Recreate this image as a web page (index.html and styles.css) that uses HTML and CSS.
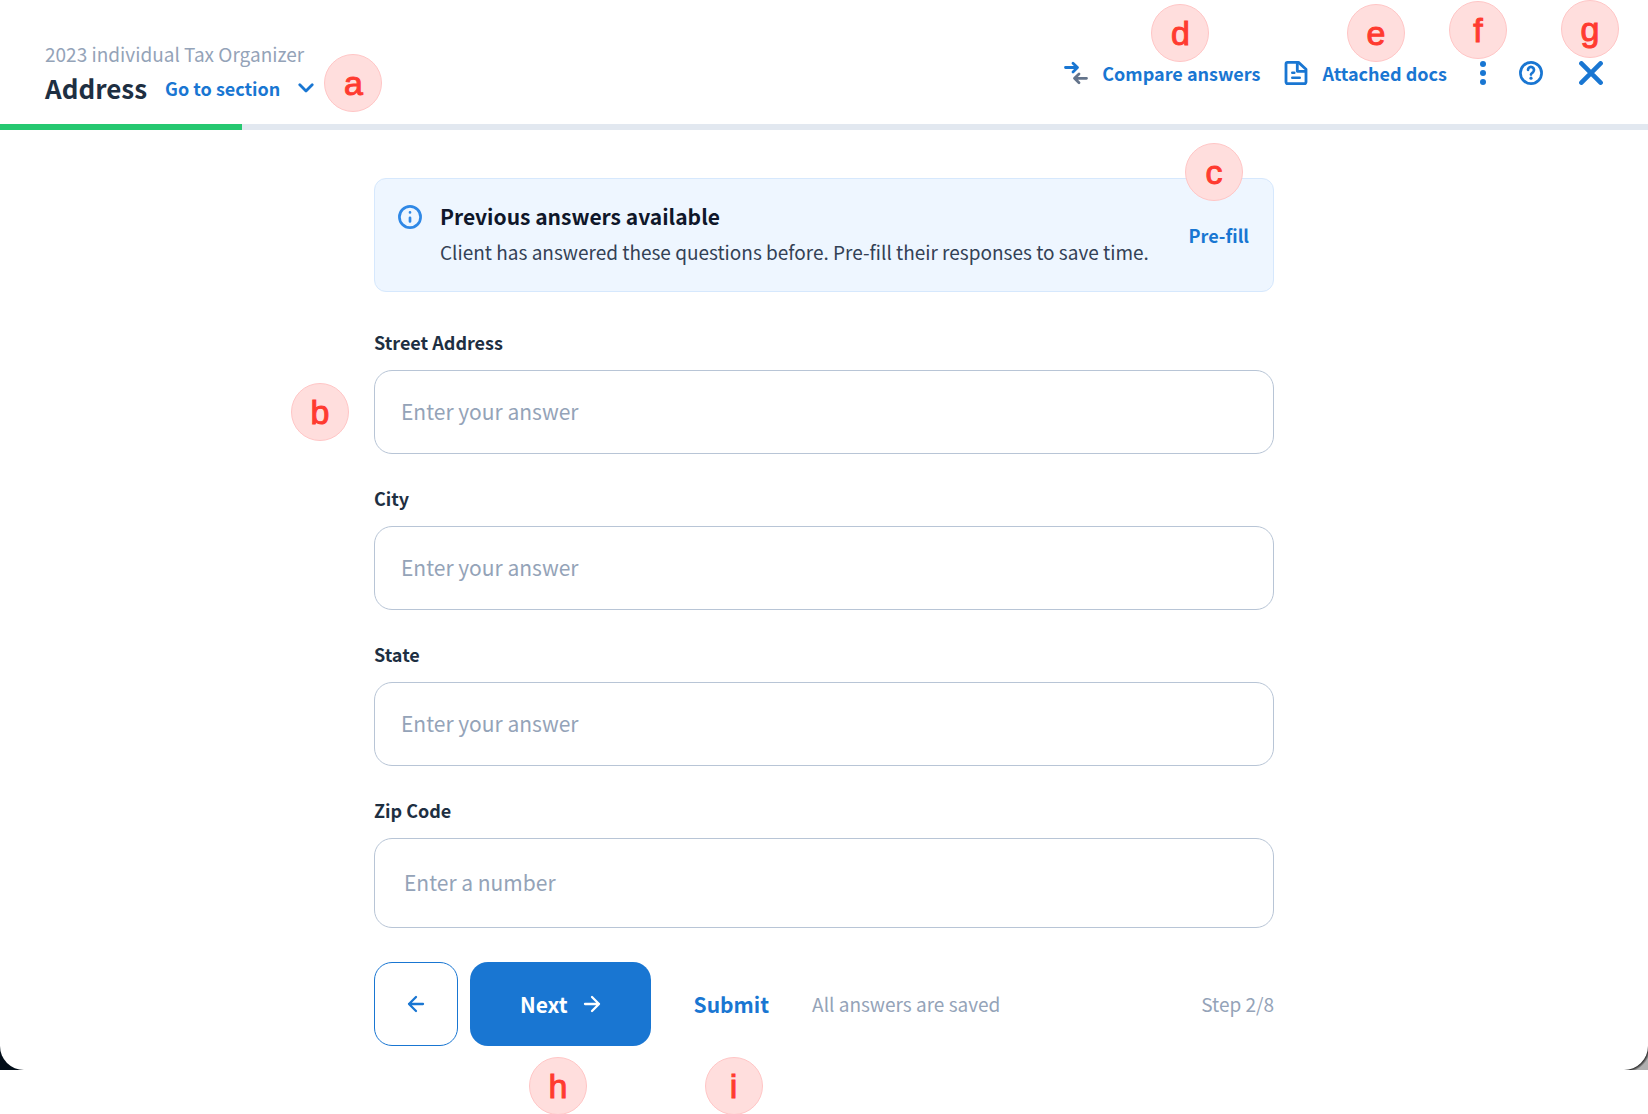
FILE: index.html
```
<!DOCTYPE html>
<html lang="en">
<head>
  <meta charset="UTF-8">
  <title>Address | 2023 individual Tax Organizer</title>
  <meta name="viewport" content="width=device-width, initial-scale=1.0">
  <link rel="stylesheet" href="styles.css">
</head>
<body>
<div class="backdrop">
  <div class="organizer">
    <header class="header">
      <div class="heading">
        <p class="organizer-name">2023 individual Tax Organizer</p>
        <div class="section-row">
          <h1>Address</h1>
          <div class="marked">
            <button type="button" class="link-btn section-btn">
              Go to section
              <svg width="16" height="10" viewBox="0 0 16 10" fill="none" stroke="currentColor" stroke-width="2.8" stroke-linecap="round" stroke-linejoin="round"><path d="M1.8 1.8 8 8l6.2-6.2"/></svg>
            </button>
            <span class="marker marker-a">a</span>
          </div>
        </div>
      </div>
      <div class="actions">
        <div class="marked">
          <button type="button" class="link-btn">
            <svg width="24" height="24" viewBox="0 0 24 24" fill="none" stroke-width="2.8" stroke-linecap="round" stroke-linejoin="round">
              <path stroke="currentColor" d="M1.500 6.500H13M9 2.200l4.500 4.300L9 11"/>
              <path stroke="#64748b" d="M22.500 17.300H11M15 13l-4.500 4.300 4.500 4.500"/>
            </svg>
            Compare answers
          </button>
          <span class="marker marker-d">d</span>
        </div>
        <div class="marked">
          <button type="button" class="link-btn">
            <svg width="24" height="24" viewBox="0 0 24 24" fill="none" stroke="currentColor" stroke-width="2.800" stroke-linejoin="round">
              <path d="M14.500 1.400H3.500A1.500 1.500 0 0 0 2 2.900v18.200a1.500 1.500 0 0 0 1.500 1.500h17a1.500 1.500 0 0 0 1.500-1.500V8.200z"/>
              <path d="M13.300 1.500v8.800h8.500"/>
              <path stroke-linecap="round" stroke-width="2.600" d="M8.300 11.800h2M8.300 16.800h7.400"/>
            </svg>
            Attached docs
          </button>
          <span class="marker marker-e">e</span>
        </div>
        <div class="icon-actions">
          <div class="marked">
            <button type="button" class="icon-btn" aria-label="More">
              <svg width="24" height="24" viewBox="0 0 24 24" fill="currentColor"><circle cx="12" cy="3" r="3"/><circle cx="12" cy="12" r="3"/><circle cx="12" cy="21" r="3"/></svg>
            </button>
            <span class="marker marker-f">f</span>
          </div>
          <button type="button" class="icon-btn" aria-label="Help">
            <svg width="24" height="24" viewBox="0 0 24 24" fill="none" stroke="currentColor" stroke-width="2.700" stroke-linecap="round" stroke-linejoin="round">
              <circle cx="12" cy="12" r="10.600"/>
              <path d="M9 8.900a3 3 0 1 1 5 2.300c-1.200 1-2 1.400-2 2.400"/>
              <circle cx="12" cy="17.200" r="1.600" fill="currentColor" stroke="none"/>
            </svg>
          </button>
        </div>
        <div class="marked">
          <button type="button" class="icon-btn" aria-label="Close">
            <svg width="24" height="24" viewBox="0 0 24 24" fill="none" stroke="currentColor" stroke-width="4.600" stroke-linecap="round"><path d="M2.400 2.400l19.200 19.200M21.600 2.400L2.400 21.600"/></svg>
          </button>
          <span class="marker marker-g">g</span>
        </div>
      </div>
    </header>
    <div class="progress"><div class="progress-done"></div></div>

    <main class="content">
      <section class="notice">
        <svg class="notice-icon" width="24" height="24" viewBox="0 0 24 24" fill="none" stroke="currentColor" stroke-width="2.700" stroke-linecap="round">
          <circle cx="12" cy="12" r="10.600"/>
          <path d="M12 12.800v3.600M12 7.400v.1"/>
        </svg>
        <div class="notice-text">
          <h2>Previous answers available</h2>
          <p>Client has answered these questions before. Pre-fill their responses to save time.</p>
        </div>
        <div class="marked">
          <button type="button" class="link-btn">Pre-fill</button>
          <span class="marker marker-c">c</span>
        </div>
      </section>

      <form class="form">
        <div class="field">
          <label for="street">Street Address</label>
          <div class="marked">
            <input id="street" type="text" placeholder="Enter your answer">
            <span class="marker marker-b">b</span>
          </div>
        </div>
        <div class="field">
          <label for="city">City</label>
          <input id="city" type="text" placeholder="Enter your answer">
        </div>
        <div class="field">
          <label for="state">State</label>
          <input id="state" type="text" placeholder="Enter your answer">
        </div>
        <div class="field">
          <label for="zip">Zip Code</label>
          <input id="zip" class="number" type="text" inputmode="numeric" placeholder="Enter a number">
        </div>

        <div class="form-nav">
          <button type="button" class="back-btn" aria-label="Back">
            <svg width="18" height="18" viewBox="0 0 18 18" fill="none" stroke="currentColor" stroke-width="2.300" stroke-linecap="round" stroke-linejoin="round"><path d="M16 9H2M9 2 2 9l7 7"/></svg>
          </button>
          <div class="marked">
            <button type="button" class="next-btn">
              Next
              <svg width="18" height="18" viewBox="0 0 18 18" fill="none" stroke="currentColor" stroke-width="2.300" stroke-linecap="round" stroke-linejoin="round"><path d="M2 9h14M9 2l7 7-7 7"/></svg>
            </button>
            <span class="marker marker-h">h</span>
          </div>
          <div class="marked">
            <button type="submit" class="submit-btn">Submit</button>
            <span class="marker marker-i">i</span>
          </div>
          <span class="status">All answers are saved</span>
          <span class="step">Step 2/8</span>
        </div>
      </form>
    </main>
  </div>
</div>
</body>
</html>
```
FILE: styles.css
```
* {
  box-sizing: border-box;
}
html, body {
  margin: 0;
  padding: 0;
  background: #fff;
  color: #1e2f42;
  font-family: "Noto Sans CJK SC", "Open Sans", sans-serif;
  font-size: 19px;
  line-height: 24px;
  overflow-x: hidden;
}
h1, h2, p {
  margin: 0;
}
button, input {
  font: inherit;
}
button {
  border: 0;
  padding: 0;
  background: none;
  color: #1976d2;
  cursor: pointer;
}
svg {
  display: block;
  flex: none;
}
/* what shows behind the rounded corners of the window */
.backdrop {
  margin-bottom: 44px;
  background: radial-gradient(circle at 0 0, #222 24px, #b0b0b0 27px) right bottom / 24px 24px no-repeat, #020d18;
}
.organizer {
  background: #fff;
  border-radius: 0 0 24px 24px;
}

/* header */
.header {
  display: flex;
  justify-content: space-between;
  align-items: center;
  height: 124px;
  padding: 22px 45px 0;
}
.heading {
  padding-top: 2px;
}
.organizer-name {
  color: #94a3b8;
}
.section-row {
  display: flex;
  align-items: center;
  gap: 18px;
  margin-top: 4px;
}
h1 {
  font-size: 26px;
  line-height: 36px;
  font-weight: bold;
}
.link-btn {
  display: flex;
  align-items: center;
  gap: 14px;
  font-size: 18px;
  font-weight: bold;
  white-space: nowrap;
}
.section-btn {
  gap: 18px;
}
.icon-btn {
  display: block;
}
.actions {
  display: flex;
  align-items: center;
  gap: 24px;
}
.icon-actions {
  display: flex;
  gap: 24px;
  margin-right: 12px;
}
.progress {
  height: 6px;
  background: #e2e8f0;
}
.progress-done {
  width: 14.7%;
  height: 100%;
  background: #26c870;
}

/* content */
.content {
  max-width: 948px;
  margin: 0 auto;
  padding: 48px 24px 24px;
}
.notice {
  display: flex;
  align-items: center;
  gap: 18px;
  min-height: 114px;
  padding: 0 24px 0 23px;
  border: 1px solid #d6e8fd;
  border-radius: 12px;
  background: #eef6ff;
}
.notice-icon {
  align-self: flex-start;
  margin-top: 26px;
  color: #2f88e6;
}
.notice-text {
  flex: 1;
  padding-bottom: 6px;
}
.notice h2 {
  font-size: 21px;
  line-height: 30px;
  color: #0f172a;
}
.notice p {
  margin-top: 9px;
  color: #334155;
}
.form {
  padding-top: 39px;
}
.field {
  margin-bottom: 33px;
}
.field label {
  display: block;
  margin-bottom: 16px;
  font-size: 18px;
  line-height: 23px;
  font-weight: bold;
}
.field input {
  display: block;
  width: 100%;
  height: 84px;
  padding: 0 26px 2px;
  border: 1px solid #b8c5d6;
  border-radius: 18px;
  background: #fff;
  color: #1e2f42;
  font-size: 21px;
}
.field input.number {
  height: 90px;
  padding: 0 29px 2px;
}
.field input::placeholder {
  color: #94a3b8;
  opacity: 1;
}
.form-nav {
  display: flex;
  align-items: center;
  gap: 12px;
  padding-top: 1px;
}
.back-btn, .next-btn {
  display: flex;
  align-items: center;
  justify-content: center;
  height: 84px;
  border-radius: 18px;
}
.back-btn {
  width: 84px;
  border: 1px solid #1976d2;
}
.next-btn {
  gap: 15px;
  padding: 0 50px;
  background: #1976d2;
  color: #fff;
}
.next-btn, .submit-btn {
  font-size: 21px;
  font-weight: bold;
}
.submit-btn {
  padding: 0 31px;
}
.status, .step {
  color: #94a3b8;
}
.step {
  margin-left: auto;
}

/* lettered markers */
.marked {
  position: relative;
}
.marker {
  position: absolute;
  display: flex;
  align-items: center;
  justify-content: center;
  width: 58px;
  height: 58px;
  padding-top: 1px;
  border: 1px solid #ffc6c6;
  border-radius: 50%;
  background: #ffdedd;
  color: #ff3b30;
  font: 34px "Liberation Sans", Arial, sans-serif;
  -webkit-text-stroke: 1px #ff3b30;
  pointer-events: none;
}
.marker-a {
  left: calc(100% + 10px);
  top: -22px;
}
.marker-b {
  right: calc(100% + 25px);
  top: 13px;
}
.marker-c {
  right: 6px;
  top: -80px;
}
.marker-d {
  right: 51px;
  top: -57px;
}
.marker-e {
  right: 42px;
  top: -57px;
}
.marker-f {
  right: -12px;
  top: -60px;
}
.marker-g {
  right: -16px;
  top: -61px;
}
.marker-h {
  left: 59px;
  top: 95px;
}
.marker-i {
  left: 42px;
  top: 65px;
}
```
